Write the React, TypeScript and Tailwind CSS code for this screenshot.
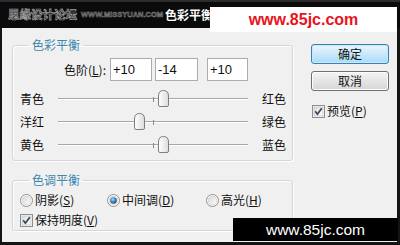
import React from "react";

const cjk = "font-['Noto_Sans_CJK_SC','Microsoft_YaHei',sans-serif]";

function CheckBox({ checked }: { checked: boolean }) {
  return (
    <svg width="13" height="13" viewBox="0 0 13 13" className="flex-none">
      <defs>
        <linearGradient id="cbg" x1="0" y1="0" x2="1" y2="1">
          <stop offset="0" stopColor="#dcdcdc" />
          <stop offset="1" stopColor="#ffffff" />
        </linearGradient>
      </defs>
      <rect x="0.5" y="0.5" width="12" height="12" fill="#fff" stroke="#8e8f8f" />
      <rect x="2" y="2" width="9" height="9" fill="url(#cbg)" stroke="#c4c4c4" strokeWidth="0.8" />
      {checked && (
        <path d="M3.2 6.3 L5.4 9.2 L9.8 3.2" fill="none" stroke="#33415a" strokeWidth="1.7" />
      )}
    </svg>
  );
}

function Radio({ checked }: { checked: boolean }) {
  return (
    <svg width="13" height="13" viewBox="0 0 13 13" className="flex-none">
      <defs>
        <linearGradient id="rbg" x1="0" y1="0" x2="1" y2="1">
          <stop offset="0" stopColor="#d6d6d6" />
          <stop offset="1" stopColor="#ffffff" />
        </linearGradient>
        <radialGradient id="rdot" cx="0.4" cy="0.35" r="0.7">
          <stop offset="0" stopColor="#a9ddf7" />
          <stop offset="0.5" stopColor="#3f86c0" />
          <stop offset="1" stopColor="#1a4a78" />
        </radialGradient>
      </defs>
      <circle cx="6.5" cy="6.5" r="6" fill="#fff" stroke="#8e8f8f" />
      <circle cx="6.5" cy="6.5" r="4.3" fill="url(#rbg)" stroke="#cfcfcf" strokeWidth="0.8" />
      {checked && <circle cx="6.5" cy="6.5" r="3.3" fill="url(#rdot)" />}
    </svg>
  );
}

function Thumb() {
  return (
    <svg width="11" height="17" viewBox="0 0 11 17">
      <defs>
        <linearGradient id="thg" x1="0" y1="0" x2="1" y2="0">
          <stop offset="0" stopColor="#ffffff" />
          <stop offset="1" stopColor="#dcdcdc" />
        </linearGradient>
      </defs>
      <path
        d="M0.5 6 Q0.5 0.5 5.5 0.5 Q10.5 0.5 10.5 6 L10.5 15 Q10.5 16.5 9 16.5 L2 16.5 Q0.5 16.5 0.5 15 Z"
        fill="url(#thg)"
        stroke="#7e7e7e"
      />
    </svg>
  );
}

function SliderRow({ left, right, value }: { left: string; right: string; value: number }) {
  const center = 95;
  return (
    <div className="flex items-center h-[23px] whitespace-nowrap">
      <div className="w-[38px] flex-none text-[12px] leading-[14px] text-[#111]">{left}</div>
      <div className="relative w-[190px] h-[23px] flex-none flex items-center">
        <div className="w-full h-[2px] border-t border-[#a7a7a7] border-b border-b-white" />
        <div className="absolute left-[95px] top-[10px] w-[1px] h-[5px] bg-[#8a8a8a]" />
        <div className="absolute top-[3px]" style={{ left: center + value - 5.5 }}>
          <Thumb />
        </div>
      </div>
      <div className="ml-[14px] flex-none whitespace-nowrap text-[12px] leading-[14px] text-[#111]">{right}</div>
    </div>
  );
}

function NumBox({ value, w }: { value: string; w: string }) {
  return (
    <div
      className={`${w} h-[23px] flex-none bg-white border border-[#abadb3] flex items-center pl-[2px] font-['Liberation_Sans',Arial,sans-serif] text-[13px] text-[#111]`}
    >
      {value}
    </div>
  );
}

export default function App() {
  return (
    <div className={`relative w-[400px] h-[245px] overflow-hidden bg-[#141414] flex flex-col ${cjk}`}>
      {/* title bar */}
      <div className="h-[28px] flex-none bg-[#0b0b0b] border-t-2 border-[#2c2c2c] flex items-center pl-[8px] whitespace-nowrap">
        <span className="text-[11.5px] font-bold leading-none text-[#1a1a1a] [-webkit-text-stroke:0.7px_#a0a0a0]">
          思缘设计论坛
        </span>
        <span className="ml-[4px] text-[7.5px] font-bold leading-none text-[#1a1a1a] font-['Liberation_Sans',Arial,sans-serif] [-webkit-text-stroke:0.5px_#8c8c8c]">
          WWW.MISSYUAN.COM
        </span>
        <span className="ml-[2px] text-[12px] font-bold leading-none text-white">色彩平衡</span>
      </div>

      {/* body */}
      <div className="flex-1 flex ml-[2px] mr-[3px] mb-[3px] bg-[#f0f0f0] pl-[10px] pt-[9px]">
        <div className="w-[281px] flex-none flex flex-col">
          <fieldset className="h-[124px] border border-[#d5d5d5] rounded-[3px] pl-[7px] pr-[2px] shadow-[inset_1px_1px_0_#fff,1px_1px_0_#fff]">
            <legend className="ml-[9px] px-[3px] text-[12px] leading-[16px] text-[#3d87ae]">色彩平衡</legend>
            <div className="mt-[5px] h-[23px] flex items-center">
              <div className="w-[90px] flex-none text-right pr-[4px] text-[12px] text-[#111]">
                色阶(<span className="underline">L</span>):
              </div>
              <NumBox value="+10" w="w-[42px]" />
              <div className="w-[3px] flex-none" />
              <NumBox value="-14" w="w-[43px]" />
              <div className="w-[9px] flex-none" />
              <NumBox value="+10" w="w-[41px]" />
            </div>
            <div className="mt-[6px]">
              <SliderRow left="青色" right="红色" value={10} />
              <SliderRow left="洋红" right="绿色" value={-14} />
              <SliderRow left="黄色" right="蓝色" value={10} />
            </div>
          </fieldset>

          <fieldset className="mt-[11px] h-[59px] border border-[#d5d5d5] rounded-[3px] px-[7px] shadow-[inset_1px_1px_0_#fff,1px_1px_0_#fff]">
            <legend className="ml-[9px] px-[3px] text-[12px] leading-[16px] text-[#3d87ae]">色调平衡</legend>
            <div className="mt-[4px] h-[16px] flex items-center text-[12px] text-[#111] whitespace-nowrap">
              <div className="w-[87px] flex-none flex items-center">
                <Radio checked={false} />
                <span className="ml-[2px]">
                  阴影(<span className="underline">S</span>)
                </span>
              </div>
              <div className="w-[99px] flex-none flex items-center">
                <Radio checked={true} />
                <span className="ml-[2px]">
                  中间调(<span className="underline">D</span>)
                </span>
              </div>
              <div className="flex items-center">
                <Radio checked={false} />
                <span className="ml-[2px]">
                  高光(<span className="underline">H</span>)
                </span>
              </div>
            </div>
            <div className="mt-[4px] h-[16px] flex items-center text-[12px] text-[#111]">
              <CheckBox checked={true} />
              <span className="ml-[2px]">
                保持明度(<span className="underline">V</span>)
              </span>
            </div>
          </fieldset>
        </div>

        <div className="ml-[18px] mt-[7px] flex flex-col w-[78px]">
          <button className="h-[20px] rounded-[3px] border border-[#3c7fb1] bg-gradient-to-b from-[#eaf6fd] to-[#a9dbf6] text-[12px] leading-none text-[#111] shadow-[inset_0_0_0_1px_#c5e9fb]">
            确定
          </button>
          <button className="mt-[7px] h-[20px] rounded-[3px] border border-[#707070] bg-gradient-to-b from-[#f4f4f4] to-[#d6d6d6] text-[12px] leading-none text-[#111] shadow-[inset_0_0_0_1px_#fcfcfc]">
            取消
          </button>
          <div className="mt-[12px] h-[16px] flex items-center text-[12px] text-[#111] ml-[1px] whitespace-nowrap">
            <CheckBox checked={true} />
            <span className="ml-[2px]">
              预览(<span className="underline">P</span>)
            </span>
          </div>
        </div>
      </div>

      {/* watermarks */}
      <div className="absolute left-[210px] top-[7px] w-[187px] h-[25px] bg-white flex items-center justify-center font-['Liberation_Sans',Arial,sans-serif] text-[16px] font-bold text-[#e8141b]">
        www.85jc.com
      </div>
      <div className="absolute left-[233px] top-[218px] w-[165px] h-[23px] bg-black flex items-center justify-center font-['Liberation_Sans',Arial,sans-serif] text-[15.5px] text-white">
        www.85jc.com
      </div>
    </div>
  );
}
